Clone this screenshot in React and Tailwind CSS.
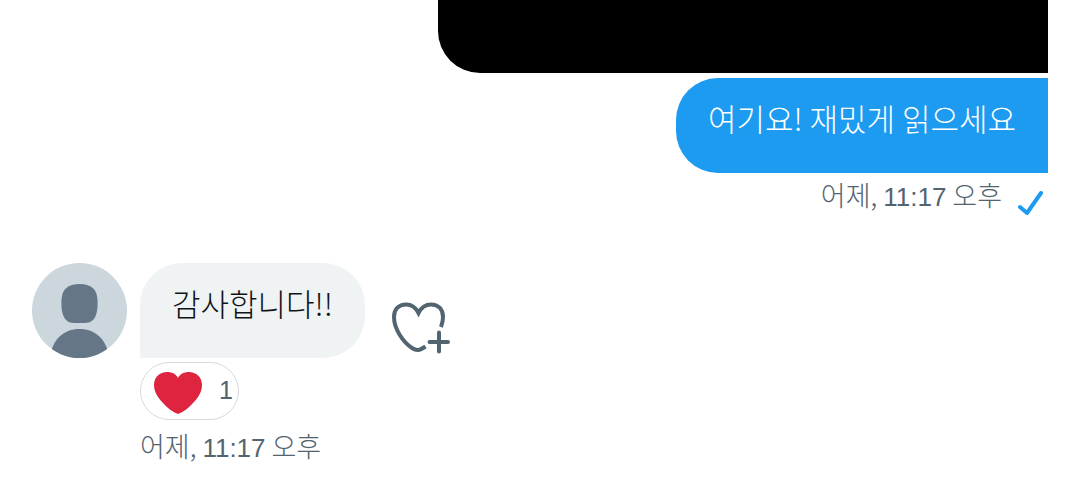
import React from 'react';
import clsx from 'clsx';

const HEART = 'M25 43 C20 41 14 37 10 32 C4 26 1 20 1 14 C1 6 7 1 14 1 C19 1 23 3 25 7 C27 3 31 1 36 1 C43 1 49 6 49 14 C49 20 46 26 40 32 C36 37 30 41 25 43 Z';

const Avatar = () => (
    <svg viewBox="0 0 95 95" className="size-[95px] shrink-0 rounded-full" role="img" aria-label="프로필">
        <rect width="95" height="95" fill="#cbd6dd" />
        <path d="M47.500 21 C59 21 65 26 65.500 37 C66 49 64 60 53 60 H42 C31 60 29 49 29.500 37 C30 26 36 21 47.500 21 Z" fill="#657786" />
        <path d="M18 95 C20 76 32 66 47.500 66 C63 66 75 76 77 95 Z" fill="#657786" />
    </svg>
);

const AddReactionIcon = () => (
    <svg viewBox="0 0 60 54" className="h-[54px] w-[60px]" fill="none" stroke="#536471" strokeWidth="4" aria-hidden="true">
        <path d="M51 27 C52.500 23 53 20 53 17 C53 9 48 4.500 41 4.500 C35 4.500 31 8 28.500 13 C26 8 22 4.500 16 4.500 C9 4.500 4 9 4 17 C4 29 13 42 22 48 C26.500 51 29 51 35.500 46.500" />
        <path d="M49 32.500 V51.500 M39.500 42 H58" strokeLinecap="round" />
    </svg>
);

const CheckIcon = () => (
    <svg viewBox="0 0 26 28" className="h-7 w-[26px]" fill="none" stroke="#1d9bf0" strokeWidth="4" strokeLinecap="round" strokeLinejoin="round" aria-label="전송됨">
        <path d="M2 20 L9 26 L23 6" />
    </svg>
);

const Bubble = ({ mine, children }) => (
    <div
        className={clsx(
            "h-[95px] px-8 pt-[22px] text-[31px] leading-9 font-light",
            mine ? "rounded-l-[42px] bg-[#1d9bf0] text-white" : "rounded-t-[42px] rounded-br-[42px] bg-[#eff3f4] text-[#0f1419]"
        )}
    >
        {children}
    </div>
);

const Timestamp = () => (
    <time className="text-[27px] leading-9 font-light text-[#536471]">
        어제, <span className="font-['Liberation_Sans'] text-[26px] font-normal">11:17</span> 오후
    </time>
);

const App = () => (
    <main className="flex flex-col bg-white px-8 pb-6 font-['Noto_Sans_CJK_KR',sans-serif]">
        {/* Sent */}
        <section className="flex flex-col items-end">
            <div className="h-[73px] w-3/5 rounded-bl-[42px] bg-black" />
            <div className="mt-[5px]">
                <Bubble mine>여기요! 재밌게 읽으세요</Bubble>
            </div>
            <div className="mt-1 flex items-end gap-4 pr-1">
                <Timestamp />
                <CheckIcon />
            </div>
        </section>

        {/* Received */}
        <section className="mt-12 flex items-start gap-[13px]">
            <Avatar />
            <div className="flex flex-col items-start">
                <div className="flex items-center gap-[25px]">
                    <Bubble>감사합니다!!</Bubble>
                    <button type="button" aria-label="반응 추가" className="mt-8 cursor-pointer">
                        <AddReactionIcon />
                    </button>
                </div>
                <button
                    type="button"
                    className="mt-1 flex h-[58px] cursor-pointer items-center gap-4 rounded-full border border-[#d5dadd] pr-[5px] pl-3 font-['Liberation_Sans'] text-[25px] text-[#536471]"
                >
                    <svg viewBox="0 0 50 44" className="mt-1 h-11 w-[50px]" fill="#df2440" aria-hidden="true">
                        <path d={HEART} />
                    </svg>
                    1
                </button>
                <div className="mt-2 flex">
                    <Timestamp />
                </div>
            </div>
        </section>
    </main>
);

export default App;
